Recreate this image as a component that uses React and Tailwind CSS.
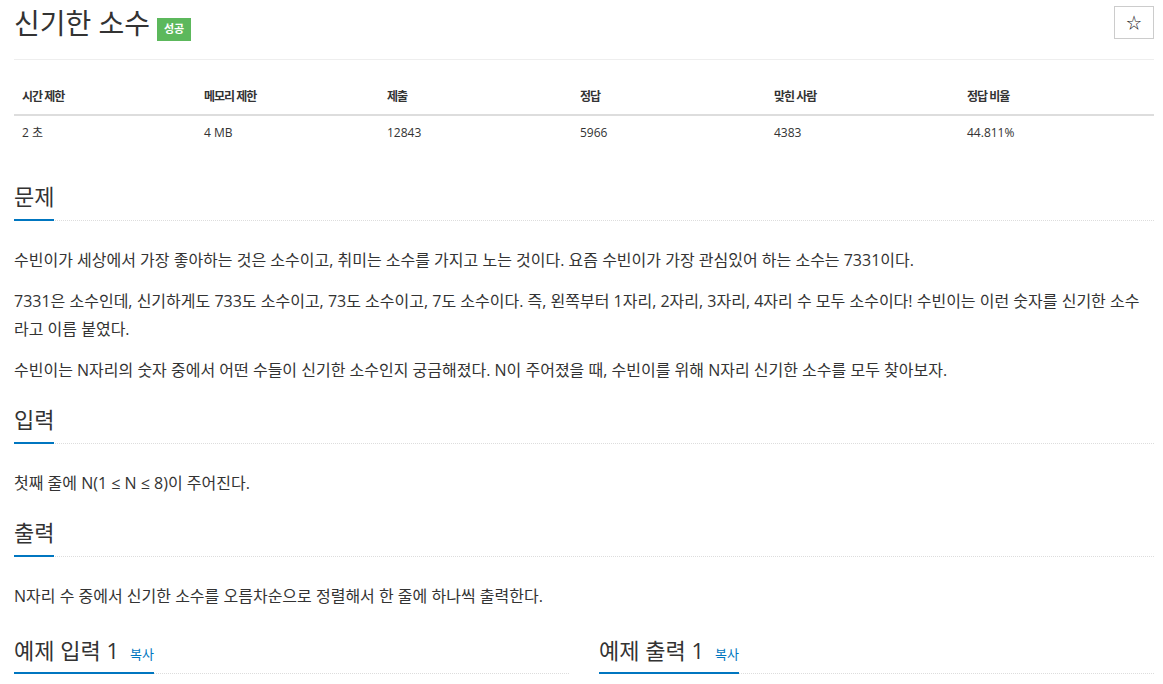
import React from 'react';

const font = { fontFamily: '"Open Sans", "Noto Sans CJK KR", sans-serif' };

const stats = [
  { label: '시간 제한', value: '2 초', w: 'w-[182px]' },
  { label: '메모리 제한', value: '4 MB', w: 'w-[183px]' },
  { label: '제출', value: '12843', w: 'w-[193px]' },
  { label: '정답', value: '5966', w: 'w-[194px]' },
  { label: '맞힌 사람', value: '4383', w: 'w-[193px]' },
  { label: '정답 비율', value: '44.811%', w: 'flex-1' },
];

const Headline = ({ children, copy }) => (
  <div className="flex items-end border-b border-dotted border-[#ddd] h-[39px]">
    <h2
      className={`flex items-baseline gap-[11px] text-[22px] leading-[28px] text-[#333] border-b-2 border-[#0076c0] -mb-[1px] ${
        copy ? 'pb-[4px]' : 'pb-[9px]'
      }`}
    >
      {children}
      {copy && <span className="text-[13px] leading-[28px] text-[#0076c0]">복사</span>}
    </h2>
  </div>
);

const Section = ({ title, children }) => (
  <section className="mt-[21px]">
    <Headline>{title}</Headline>
    <div className="mt-[25px] flex flex-col gap-[13px] text-[16px] leading-[28px] text-[#333]">
      {children}
    </div>
  </section>
);

export default function App() {
  return (
    <div className="w-[1163px] pl-[14px] pr-[9px] bg-white" style={font}>
      <div className="h-[60px] flex items-start justify-between pt-[6px] border-b border-[#eee]">
        <h1 className="flex items-start gap-[7px]">
          <span className="text-[28px] leading-[34px] text-[#333]">신기한 소수</span>
          <span className="mt-[12px] w-[34px] h-[23px] flex items-center justify-center bg-[#5cb85c] text-white text-[11px] font-bold">성공</span>
        </h1>
        <button className="w-[40px] h-[33px] border border-[#ccc] flex items-center justify-center text-[15px] text-[#222] bg-white">☆</button>
      </div>

      <div className="pt-[20px] text-[12px] text-[#333]">
        <div className="flex border-b-2 border-[#ddd]">
          {stats.map((s) => (
            <div key={s.label} className={`${s.w} px-[8px] py-[8px] leading-[18px] font-bold tracking-[-1px]`}>{s.label}</div>
          ))}
        </div>
        <div className="flex">
          {stats.map((s) => (
            <div key={s.label} className={`${s.w} px-[8px] py-[8px] leading-[18px]`}>{s.value}</div>
          ))}
        </div>
      </div>

      <div className="pt-[11px]">
        <Section title="문제">
          <p>수빈이가 세상에서 가장 좋아하는 것은 소수이고, 취미는 소수를 가지고 노는 것이다. 요즘 수빈이가 가장 관심있어 하는 소수는 7331이다.</p>
          <p>7331은 소수인데, 신기하게도 733도 소수이고, 73도 소수이고, 7도 소수이다. 즉, 왼쪽부터 1자리, 2자리, 3자리, 4자리 수 모두 소수이다! 수빈이는 이런 숫자를 신기한 소수라고 이름 붙였다.</p>
          <p>수빈이는 N자리의 숫자 중에서 어떤 수들이 신기한 소수인지 궁금해졌다. N이 주어졌을 때, 수빈이를 위해 N자리 신기한 소수를 모두 찾아보자.</p>
        </Section>
        <Section title="입력">
          <p>첫째 줄에 N(1 ≤ N ≤ 8)이 주어진다.</p>
        </Section>
        <Section title="출력">
          <p>N자리 수 중에서 신기한 소수를 오름차순으로 정렬해서 한 줄에 하나씩 출력한다.</p>
        </Section>
        <div className="mt-[25px] grid grid-cols-2 gap-[30px]">
          <Headline copy>예제 입력 1</Headline>
          <Headline copy>예제 출력 1</Headline>
        </div>
      </div>
    </div>
  );
}
